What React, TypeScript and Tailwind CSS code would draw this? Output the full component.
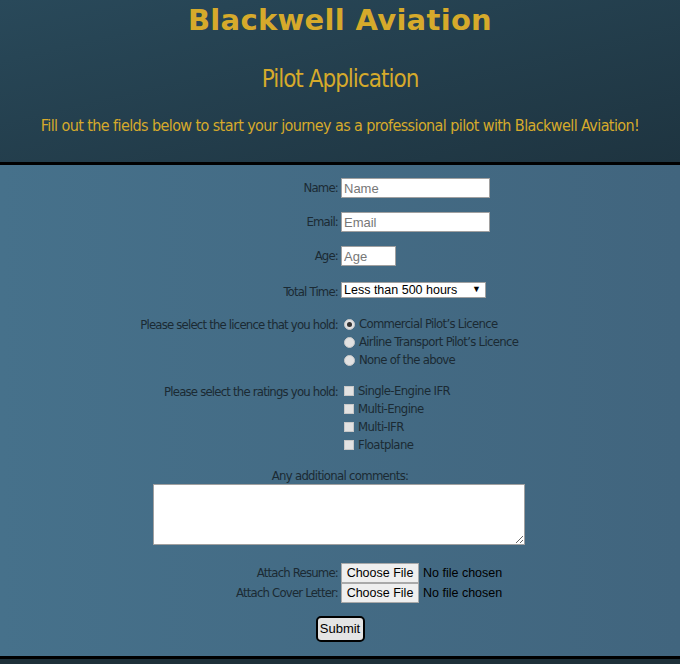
const cond = "font-['DejaVu_Sans_Condensed','DejaVu_Sans',sans-serif] font-stretch-condensed";
const ui = "font-['Liberation_Sans',Arial,sans-serif]";

function Row({ label, children, className = '' }: any) {
  return (
    <div className={`flex items-start ${className}`}>
      <div className={`w-[341px] text-right pr-[3px] pt-[1px] text-[13px] leading-[18px] tracking-[-0.8px] text-[#1b2a33] ${cond}`}>{label}</div>
      <div>{children}</div>
    </div>
  );
}

function Radio({ checked, label }: any) {
  return (
    <div className={`flex items-center h-[18px] text-[13px] tracking-[-0.7px] text-[#1b2a33] ${cond}`}>
      <span className="ml-[3px] mr-[4px] w-[11px] h-[11px] rounded-full bg-[#e2e2e2] border border-[#c8c8c8] flex items-center justify-center">
        {checked && <span className="w-[5px] h-[5px] rounded-full bg-[#333]" />}
      </span>
      {label}
    </div>
  );
}

function Check({ label }: any) {
  return (
    <div className={`flex items-center h-[18px] text-[13px] tracking-[-0.6px] text-[#1b2a33] ${cond}`}>
      <span className="ml-[3px] mr-[4px] w-[10px] h-[10px] bg-[#e2e2e2] border border-[#c8c8c8]" />
      {label}
    </div>
  );
}

function FileBox() {
  return (
    <div className={`flex items-center text-[12.5px] text-black ${ui}`}>
      <span className="h-[20px] w-[78px] flex items-center justify-center bg-[#efefef] border border-[#a9a9a9]">Choose File</span>
      <span className="ml-[4px]">No file chosen</span>
    </div>
  );
}

const field = `block h-[20px] px-[2px] bg-white border border-[#a0a0a0] text-[13px] ${ui} placeholder:text-[#777] outline-none`;

export default function App() {
  return (
    <div className="w-[680px] h-[664px] overflow-hidden bg-[#1d3039]">
      <header className="h-[162px] bg-gradient-to-br from-[#29495a] to-[#1e3440] flex flex-col items-center text-[#d6aa2b]">
        <h1 className="mt-[3px] text-[29px] leading-[34px] font-bold font-['DejaVu_Sans',sans-serif] tracking-[0.3px]">Blackwell Aviation</h1>
        <h2 className={`mt-[27px] text-[24px] leading-[30px] tracking-[-1px] ${cond}`}>Pilot Application</h2>
        <p className={`mt-[21px] text-[16px] leading-[22px] tracking-[-0.6px] whitespace-nowrap ${cond}`}>
          Fill out the fields below to start your journey as a professional pilot with Blackwell Aviation!
        </p>
      </header>
      <div className="h-[3px] bg-black" />
      <main className="h-[491px] bg-gradient-to-r from-[#46718b] to-[#41657e] pt-[13px]">
        <Row label="Name:">
          <input placeholder="Name" className={`w-[149px] ${field}`} />
        </Row>
        <Row label="Email:" className="mt-[14px]">
          <input placeholder="Email" className={`w-[149px] ${field}`} />
        </Row>
        <Row label="Age:" className="mt-[14px]">
          <input placeholder="Age" className={`w-[55px] ${field}`} />
        </Row>
        <Row label="Total Time:" className="mt-[16px]">
          <div className={`w-[145px] h-[16px] bg-white border border-[#a0a0a0] flex items-center justify-between px-[2px] text-[12.5px] text-black ${ui}`}>
            <span>Less than 500 hours</span>
            <span className="text-[9px] mr-[2px]">▼</span>
          </div>
        </Row>
        <Row label="Please select the licence that you hold:" className="mt-[14px]">
          <Radio checked label="Commercial Pilot’s Licence" />
          <Radio label="Airline Transport Pilot’s Licence" />
          <Radio label="None of the above" />
        </Row>
        <Row label="Please select the ratings you hold:" className="mt-[13px]">
          <Check label="Single-Engine IFR" />
          <Check label="Multi-Engine" />
          <Check label="Multi-IFR" />
          <Check label="Floatplane" />
        </Row>
        <div className={`mt-[13px] text-center text-[13px] leading-[17px] tracking-[-0.7px] text-[#1b2a33] ${cond}`}>Any additional comments:</div>
        <div className="flex justify-center">
          <textarea className="block w-[372px] h-[61px] -ml-[2px] bg-white border border-[#a0a0a0] outline-none resize-y" />
        </div>
        <Row label="Attach Resume:" className="mt-[18px]">
          <FileBox />
        </Row>
        <Row label="Attach Cover Letter:">
          <FileBox />
        </Row>
        <div className="flex justify-center mt-[13px]">
          <button className={`w-[49px] h-[26px] bg-[#e4e4e4] border-2 border-black rounded-[5px] text-[13px] text-black ${ui}`}>Submit</button>
        </div>
      </main>
      <div className="h-[3px] bg-black" />
    </div>
  );
}
